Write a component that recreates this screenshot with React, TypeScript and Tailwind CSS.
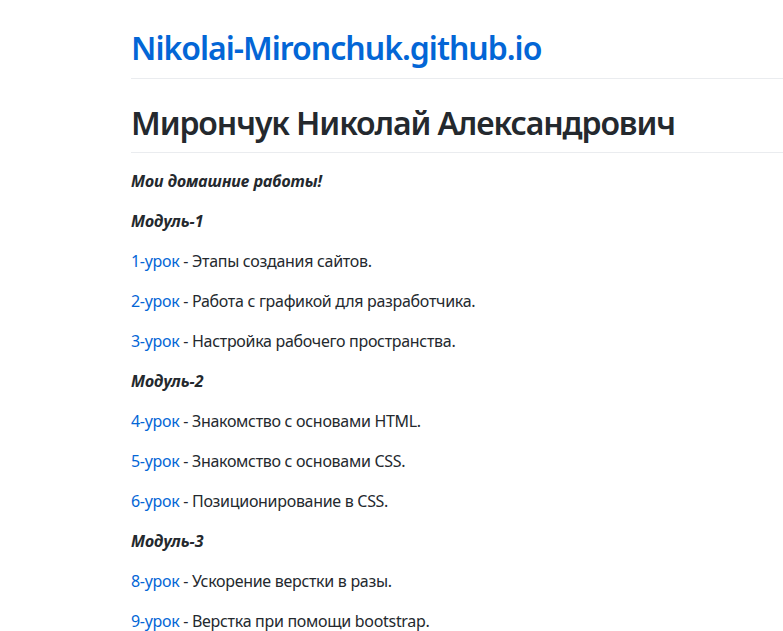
const lessons: { module: string; items: { n: number; text: string }[] }[] = [
  {
    module: "Модуль-1",
    items: [
      { n: 1, text: "Этапы создания сайтов." },
      { n: 2, text: "Работа с графикой для разработчика." },
      { n: 3, text: "Настройка рабочего пространства." },
    ],
  },
  {
    module: "Модуль-2",
    items: [
      { n: 4, text: "Знакомство с основами HTML." },
      { n: 5, text: "Знакомство с основами CSS." },
      { n: 6, text: "Позиционирование в CSS." },
    ],
  },
  {
    module: "Модуль-3",
    items: [
      { n: 8, text: "Ускорение верстки в разы." },
      { n: 9, text: "Верстка при помощи bootstrap." },
    ],
  },
];

export default function App() {
  return (
    <div
      className="min-h-screen w-full overflow-hidden bg-white pl-[131px] pt-[28px] text-[16px] leading-[24px] text-[#24292e]"
      style={{ fontFamily: '"Noto Sans", "Open Sans", sans-serif' }}
    >
      <h1 className="border-b border-[#eaecef] pb-[9.6px] text-[32px] font-semibold leading-[40px] tracking-[-1px]">
        <a href="#" className="text-[#0366d6]">
          Nikolai-Mironchuk.github.io
        </a>
      </h1>

      <h1 className="mt-[24px] mb-[16px] border-b border-[#eaecef] pb-[9.6px] text-[32px] font-semibold leading-[40px] tracking-[-1.1px]">
        Мирончук Николай Александрович
      </h1>

      <p className="mb-[16px] font-bold italic">Мои домашние работы!</p>

      {lessons.map((m) => (
        <div key={m.module}>
          <p className="mb-[16px] font-bold italic">{m.module}</p>
          {m.items.map((it) => (
            <p key={it.n} className="mb-[16px] tracking-[-0.3px]">
              <a href="#" className="text-[#0366d6]">
                {it.n}-урок
              </a>{" "}
              - {it.text}
            </p>
          ))}
        </div>
      ))}
    </div>
  );
}
